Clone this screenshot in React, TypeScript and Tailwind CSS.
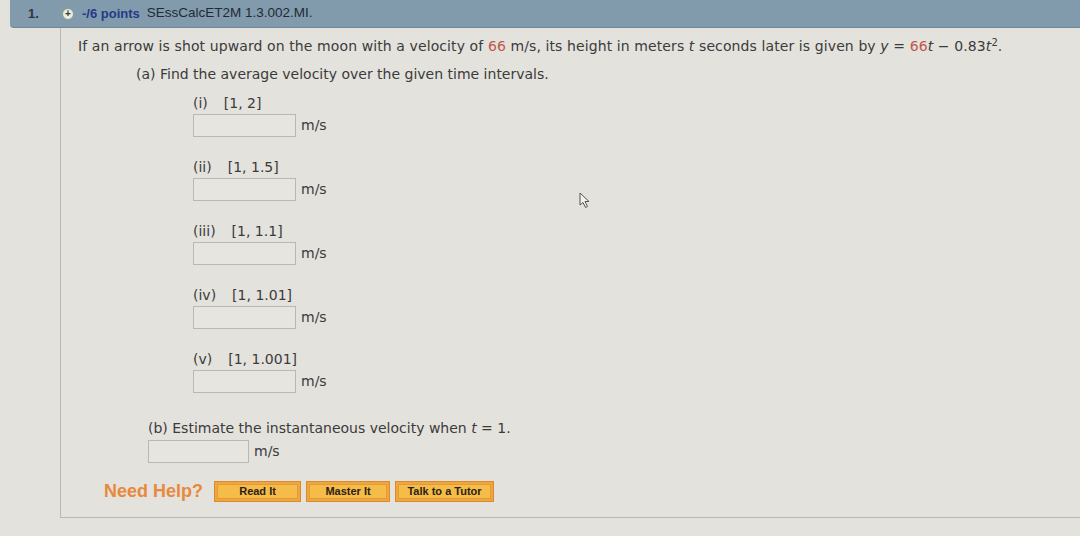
import React from "react";

const parts = [
  { label: "(i)", range: "[1, 2]" },
  { label: "(ii)", range: "[1, 1.5]" },
  { label: "(iii)", range: "[1, 1.1]" },
  { label: "(iv)", range: "[1, 1.01]" },
  { label: "(v)", range: "[1, 1.001]" },
];

function AnswerBox({ width = "w-[103px]" }: { width?: string }) {
  return (
    <div className={`${width} h-[23px] border border-[#b9b9b4] bg-[#e6e5e0]`} />
  );
}

function HelpButton({ children, width }: { children: React.ReactNode; width: string }) {
  return (
    <div className={`${width} h-[21px] p-[2px] bg-[#f0a640] border border-[#d98a2c]`}>
      <div className="h-full flex items-center justify-center bg-[#f6bc4a] border border-[#e39b36] text-[11px] font-bold text-[#2a2216] font-['Liberation_Sans',Arial,sans-serif]">
        {children}
      </div>
    </div>
  );
}

export default function App() {
  return (
    <div className="relative w-[1080px] h-[536px] overflow-hidden bg-[#e3e2dd] text-[#3b3b3b] font-['DejaVu_Sans',Verdana,sans-serif]">
      {/* question header */}
      <div className="ml-[10px] h-[28px] rounded-bl-[4px] bg-[#819bad] border-b border-[#6f8799] flex items-center font-['Liberation_Sans',Arial,sans-serif] text-[13px]">
        <span className="ml-[18px] w-[34px] font-bold text-[#2b3440]">1.</span>
        <span className="w-[12px] h-[12px] rounded-full bg-[#e9ece4] border border-[#8a9a88] flex items-center justify-center text-[10px] font-bold leading-none text-[#34402f]">
          +
        </span>
        <span className="ml-[8px] font-bold text-[#243a86]">-/6 points</span>
        <span className="ml-[7px] text-[13.5px] text-[#1f2a36]">SEssCalcET2M 1.3.002.MI.</span>
      </div>

      {/* question body */}
      <div className="ml-[60px] h-[490px] border-l border-b border-[#b9b8b2] pl-[17px] pt-[8px] text-[14px]">
        <p className="leading-[20px] tracking-[0.1px]">
          If an arrow is shot upward on the moon with a velocity of{" "}
          <span className="text-[#c0584a]">66</span> m/s, its height in meters <i>t</i> seconds later is given by{" "}
          <i>y</i> = <span className="text-[#c0584a]">66</span>
          <i>t</i> − 0.83<i>t</i>
          <sup className="text-[10px]">2</sup>.
        </p>

        <p className="ml-[58px] mt-[8px] leading-[20px]">(a) Find the average velocity over the given time intervals.</p>

        <div className="ml-[115px] mt-[10px] flex flex-col gap-[21px]">
          {parts.map((p) => (
            <div key={p.label}>
              <div className="flex gap-[16px] leading-[18px]">
                <span>{p.label}</span>
                <span>{p.range}</span>
              </div>
              <div className="mt-[2px] flex items-center gap-[5px]">
                <AnswerBox />
                <span>m/s</span>
              </div>
            </div>
          ))}
        </div>

        <div className="ml-[70px] mt-[26px]">
          <p className="leading-[18px]">
            (b) Estimate the instantaneous velocity when <i>t</i> = 1.
          </p>
          <div className="mt-[3px] flex items-center gap-[5px]">
            <AnswerBox width="w-[101px]" />
            <span>m/s</span>
          </div>
        </div>

        <div className="ml-[26px] mt-[15px] flex items-center gap-[5px]">
          <span className="mr-[6px] text-[18px] font-bold text-[#e8893c] font-['Liberation_Sans',Arial,sans-serif]">
            Need Help?
          </span>
          <HelpButton width="w-[87px]">Read It</HelpButton>
          <HelpButton width="w-[84px]">Master It</HelpButton>
          <HelpButton width="w-[99px]">Talk to a Tutor</HelpButton>
        </div>
      </div>

      {/* mouse pointer */}
      <svg className="absolute left-[579px] top-[192px]" width="12" height="17" viewBox="0 0 12 17">
        <path d="M1 1 L1 13 L4 10.5 L6.5 15.5 L8.5 14.5 L6 9.5 L10 9.5 Z" fill="#f2f1ec" stroke="#555" strokeWidth="1" strokeLinejoin="round" />
      </svg>
    </div>
  );
}
